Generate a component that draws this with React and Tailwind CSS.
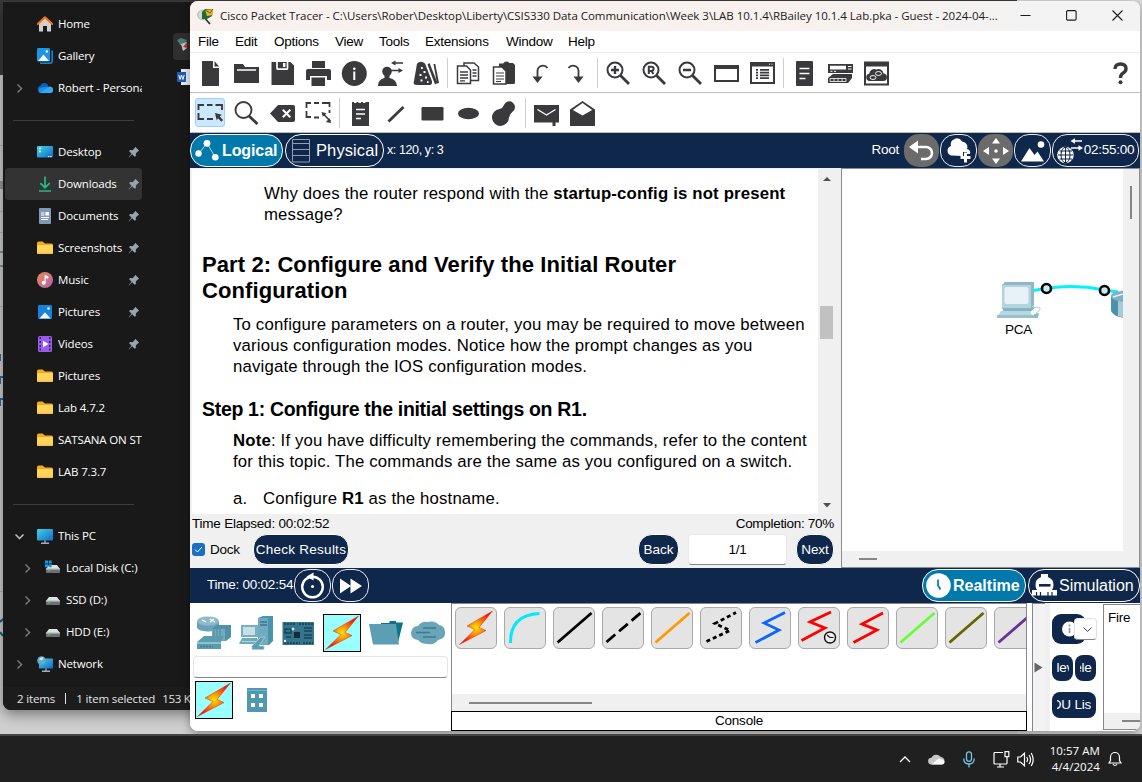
import React from "react";

const SEGOE = "font-['Open_Sans','Noto_Sans',sans-serif]";

/* ---------- File explorer icons (16 x 16) ---------- */
const FolderIcon = () => (
  <svg width="16" height="16" viewBox="0 0 16 16">
    <path d="M0 3q0-1.500 1.500-1.500h4L8 3.500h6.500q1.500 0 1.500 1.500v3H0z" fill="#f5ab0c" />
    <path d="M0 6.200q0-1.200 1.200-1.200H14.800q1.200 0 1.200 1.200V12.800q0 1.200-1.200 1.200H1.200Q0 14 0 12.800z" fill="#fdd25e" />
    <path d="M0 12.500q0 1.500 1.200 1.500H14.800q1.200 0 1.200-1.500z" fill="#fbc13a" />
  </svg>
);
const HomeIcon = () => (
  <svg width="16" height="16" viewBox="0 0 16 16">
    <path d="M2 6.500L8 1l6 5.500V15.500H10V10H6v5.500H2z" fill="#cfcfcf" />
    <path d="M.7 8L8 1.300 15.300 8" fill="none" stroke="#ec7216" strokeWidth="2.200" strokeLinecap="round" strokeLinejoin="round" />
  </svg>
);
const GalleryIcon = () => (
  <svg width="16" height="16" viewBox="0 0 16 16">
    <path d="M15.200 2.500V13q0 2.300-2.300 2.300H3" fill="none" stroke="#1784d8" strokeWidth="1.600" />
    <rect x="0" y="0" width="13" height="13.500" rx="1.200" fill="#1d95e2" />
    <path d="M1 13L6.500 6.500 12 13z" fill="#f2f8fd" />
    <circle cx="9.800" cy="3.500" r="1.200" fill="#fff" />
  </svg>
);
const OneDriveIcon = () => (
  <svg width="16" height="16" viewBox="0 0 16 16">
    <path d="M3.500 12.500a3.500 3.500 0 0 1-.3-6.800A4.500 4.500 0 0 1 11 4.800l-1 7.700z" fill="#0a5fbd" />
    <path d="M3 13a3 3 0 0 1 2-5.500L11 6.500a3.600 3.600 0 0 1 1.700 6.500z" fill="#1a90e8" />
    <path d="M3 13l8-5.500A3 3 0 0 1 16 10.500 2.500 2.500 0 0 1 13.500 13z" fill="#35a9f1" />
  </svg>
);
const DesktopIcon = () => (
  <svg width="16" height="16" viewBox="0 0 16 16">
    <defs>
      <linearGradient id="desk" x1="0" y1="0" x2="1" y2="1">
        <stop offset="0" stopColor="#3ed5e8" />
        <stop offset="1" stopColor="#1469c7" />
      </linearGradient>
    </defs>
    <rect y="2" width="16" height="11.500" rx="1" fill="url(#desk)" />
    <path d="M2 4.500h2M2 7.500h2" stroke="#fff" strokeWidth="1.600" />
    <path d="M11 12.600h1.400M13.200 12.600h1.400" stroke="#fff" strokeWidth="1" />
  </svg>
);
const DownloadIcon = () => (
  <svg width="16" height="16" viewBox="0 0 16 16" fill="none" stroke="#27b98a" strokeWidth="1.700">
    <path d="M8 .5v11M3.300 7.200L8 11.700l4.700-4.500M2 15h12" />
  </svg>
);
const DocumentIcon = () => (
  <svg width="16" height="16" viewBox="0 0 16 16">
    <rect x="2" y="0" width="12" height="16" rx="1" fill="#8199b8" />
    <path d="M4 5h3.500M4 7h3.500M4 9.500h8M4 11.500h7" stroke="#fff" strokeWidth="1.100" />
    <rect x="8.500" y="4" width="3.500" height="3.500" fill="#fff" />
  </svg>
);
const MusicIcon = () => (
  <svg width="16" height="16" viewBox="0 0 16 16">
    <defs>
      <linearGradient id="mus" x1="0" y1="0" x2="1" y2="1">
        <stop offset="0" stopColor="#f08a4b" />
        <stop offset="1" stopColor="#a861b8" />
      </linearGradient>
    </defs>
    <circle cx="8" cy="8" r="8" fill="url(#mus)" />
    <circle cx="6.700" cy="10.800" r="2" fill="#fff" />
    <path d="M8 11V3.500l3 1.200v1.600L8.800 5.500" fill="#fff" stroke="#fff" strokeWidth=".9" />
  </svg>
);
const PicturesIcon = () => (
  <svg width="16" height="16" viewBox="0 0 16 16">
    <rect x="1" y="1" width="14" height="14" rx="1.200" fill="#1583da" />
    <path d="M2.500 14.500L8 8.200l5.500 6.300z" fill="#eef6fd" />
    <circle cx="11.500" cy="4.500" r="1.300" fill="#fff" />
  </svg>
);
const VideosIcon = () => (
  <svg width="16" height="16" viewBox="0 0 16 16">
    <rect x="1" y="0" width="14" height="16" rx="1.500" fill="#9a5be8" />
    <path d="M2.500 2h1.500M2.500 6h1.500M2.500 10h1.500M2.500 13.500h1.500M12 2h1.500M12 6h1.500M12 10h1.500M12 13.500h1.500" stroke="#3c1a75" strokeWidth="1.800" />
    <path d="M6 4.800L11.500 8 6 11.200z" fill="#fff" />
  </svg>
);
const PcIcon = () => (
  <svg width="16" height="16" viewBox="0 0 16 16">
    <rect y="1" width="16" height="11.500" rx=".8" fill="url(#desk)" />
    <path d="M8 12.500v2.500M4 15.200h8" stroke="#9fb0bd" strokeWidth="1.400" />
  </svg>
);
const DriveIcon = ({ system }) => (
  <svg width="16" height="16" viewBox="0 0 16 16">
    <path d="M4 5h8l3 4H1z" fill="#dfe1e3" />
    <rect x="1" y="8.500" width="14" height="4.500" rx=".8" fill="#6c7074" />
    <path d="M1 9h14" stroke="#f3f3f3" strokeWidth=".8" />
    <rect x="3.500" y="10" width="1.300" height="1.300" fill="#3ddc5c" />
    {system && <path d="M0 .5h3v3H0zM3.700 .5h3v3h-3zM0 4.200h3v3H0zM3.700 4.200h3v3h-3z" fill="#149be6" />}
  </svg>
);
const NetworkIcon = () => (
  <svg width="16" height="16" viewBox="0 0 16 16">
    <rect x="2" y="2.500" width="14" height="10" rx=".6" fill="url(#desk)" />
    <path d="M9 12.500V15M5 15.300h8" stroke="#9fb0bd" strokeWidth="1.400" />
    <circle cx="4.500" cy="4.500" r="4.300" fill="#69a9c9" />
    <path d="M2 3.200q2.500-2.500 4.500-1.700L5 4.500z" fill="#d5edf7" />
  </svg>
);
const Pin = () => (
  <svg width="12" height="12" viewBox="0 0 12 12" className="shrink-0">
    <path d="M7.300 0.800l3.900 3.900-1.400.8-2 2 .1 2.600-1.300.6-2.400-2.400L.8 11.400.6 11.200 3.600 7.700 1.200 5.300l.7-1.200 2.600.1 2-2z" fill="#9ba4ad" />
  </svg>
);
const Chevron = ({ open }) => (
  <svg width="9" height="9" viewBox="0 0 9 9" fill="none" stroke={open ? "#c4c4c4" : "#757575"} strokeWidth="1.500">
    <path d={open ? "M.5 2.500l4 4 4-4" : "M2.500 .5l4 4-4 4"} />
  </svg>
);

const NAV = [
  { label: "Home", icon: HomeIcon },
  { label: "Gallery", icon: GalleryIcon },
  { label: "Robert - Personal", icon: OneDriveIcon, chevron: "closed" },
  { divider: true },
  { label: "Desktop", icon: DesktopIcon, pin: true },
  { label: "Downloads", icon: DownloadIcon, pin: true, active: true },
  { label: "Documents", icon: DocumentIcon, pin: true },
  { label: "Screenshots", icon: FolderIcon, pin: true },
  { label: "Music", icon: MusicIcon, pin: true },
  { label: "Pictures", icon: PicturesIcon, pin: true },
  { label: "Videos", icon: VideosIcon, pin: true },
  { label: "Pictures", icon: FolderIcon },
  { label: "Lab 4.7.2", icon: FolderIcon },
  { label: "SATSANA ON ST", icon: FolderIcon },
  { label: "LAB 7.3.7", icon: FolderIcon },
  { divider: true },
  { label: "This PC", icon: PcIcon, chevron: "open" },
  { label: "Local Disk (C:)", icon: DriveIcon, chevron: "closed", child: true, system: true },
  { label: "SSD (D:)", icon: DriveIcon, chevron: "closed", child: true },
  { label: "HDD (E:)", icon: DriveIcon, chevron: "closed", child: true },
  { label: "Network", icon: NetworkIcon, chevron: "closed" },
];

function NavRow({ item }) {
  if (item.divider)
    return (
      <div className="flex h-8 items-center pl-2">
        <div className="h-px w-[121px] bg-[#3d3d3d]" />
      </div>
    );
  const Icon = item.icon;
  return (
    <div className={"flex h-8 items-center overflow-hidden rounded-sm " + (item.child ? "pl-[18px] " : "pl-[10px] ") + (item.active ? "bg-[#333333]" : "")}>
      <div className="w-[9px] shrink-0">{item.chevron && <Chevron open={item.chevron === "open"} />}</div>
      <div className="ml-[13px] w-4 shrink-0">
        <Icon system={item.system} />
      </div>
      <div className="ml-[5px] min-w-0 flex-1 overflow-hidden whitespace-nowrap">{item.label}</div>
      {item.pin && (
        <div className="mr-[2px]">
          <Pin />
        </div>
      )}
    </div>
  );
}

function Explorer() {
  return (
    <div className={"absolute left-[3px] top-px flex h-[709px] w-[200px] flex-col overflow-hidden rounded-bl-lg bg-[#191919] text-[11.5px] tracking-[-0.14px] text-white shadow-[0_4px_14px_rgba(0,0,0,0.45)] " + SEGOE}>
      <div className="h-px shrink-0 bg-[#3a3a3a]" />
      <div className="flex h-[685px]">
        <div className="w-[139px] pl-[2px] pt-[6px]">
          {NAV.map((item, i) => (
            <NavRow key={i} item={item} />
          ))}
        </div>
        <div className="ml-2 mt-[17px] h-[620px] w-[2px] bg-[#9a9a9a]" />
        <div className="ml-[9px] h-full w-[2px] bg-[#272727]" />
        <div className="flex flex-col pl-[14px] pt-[31px]">
          <div className="flex h-[27px] w-10 items-start rounded-sm bg-[#2f2f2f] pl-1 pt-[5px]">
            <svg width="14" height="14" viewBox="0 0 14 14">
              <path d="M0 2l4-2 6 2-2 5-5 0z" fill="#477a78" />
              <path d="M4 6l6-2v6l-4 3z" fill="#bfc9c9" />
              <path d="M6 9l4-5v6z" fill="#cc2f2f" />
            </svg>
          </div>
          <svg width="16" height="17" viewBox="0 0 16 17" className="ml-1 mt-[9px]">
            <rect x="4" width="12" height="16" fill="#e9edf2" />
            <rect y="3" width="9" height="10" fill="#1b5cbe" />
            <path d="M1.800 6l1.300 4.500L4.500 6l1.400 4.500L7.200 6" fill="none" stroke="#fff" strokeWidth="1" />
          </svg>
        </div>
      </div>
      <div className="flex flex-1 items-center bg-[#1c1c1c] pl-[14px] text-[#e4e4e4]">
        <span>2 items</span>
        <span className="ml-[10px] h-[11px] w-px bg-[#e4e4e4]" />
        <span className="ml-[10px] whitespace-nowrap">1 item selected</span>
        <span className="ml-[7px] whitespace-nowrap tracking-[-0.3px]">153 K</span>
      </div>
    </div>
  );
}

/* ---------- Toolbar icons (26 x 26) ---------- */
const INK = "#3a3a3c";
const Glyph = ({ children }) => (
  <svg width="26" height="26" viewBox="0 0 26 26" fill={INK}>
    {children}
  </svg>
);
const Magnifier = ({ children }) => (
  <Glyph>
    <g fill="none" stroke={INK}>
      <circle cx="10" cy="10" r="7.500" strokeWidth="2" />
      <path d="M15.500 15.500L24 24" strokeWidth="2.800" />
      {children}
    </g>
  </Glyph>
);
const ICONS = {
  new: <Glyph><path d="M5 1h11v7h6v18H5zM17.500 1L22 6.500h-4.500z" /></Glyph>,
  open: <Glyph><path d="M1 4h9l2 3h14v16H1z" /><path d="M4 10h19" stroke="#fff" strokeWidth="1.300" /></Glyph>,
  save: <Glyph><path d="M2.500 2H21.500l3.500 3.500V25H2.500z" /><path d="M8 1v7.200q0 1 1 1h8.500q1 0 1-1V1" fill="none" stroke="#fff" strokeWidth="1.700" /><path d="M14 3h2.400v4H14z" fill="#fff" /></Glyph>,
  print: <Glyph><path d="M7 1h13v7H7zM3 9h21q2 0 2 2v9h-4v-4H5v4H1v-9q0-2 2-2z" /><path d="M6.500 17.500h13.500V26H6.500z" /></Glyph>,
  info: <Glyph><circle cx="13.300" cy="13.500" r="12.500" /><path d="M13.300 11.500V20" stroke="#fff" strokeWidth="2" /><circle cx="13.300" cy="8.700" r="1.300" fill="#fff" /></Glyph>,
  user: <Glyph><circle cx="10" cy="11.500" r="4.800" /><path d="M7.500 14h5v4q7 1.500 7.500 8H1q0-6.500 6.500-8z" /><path d="M18 3h8M14 10.500h9" stroke={INK} strokeWidth="1.600" /><path d="M14 3l4.500-2.600v5.200zM26 10.500l-4.500-2.600v5.200z" /></Glyph>,
  shapes: (
    <Glyph>
      <path d="M4 3.500q4-3.500 8 0L18.500 20q2 5-3 5H4q-4.500 0-3-4z" />
      <path d="M14.500 4.500l2-1.500L24.500 23l-2.500 1.500z" />
      <path d="M20.500 4l1.800 0 3.700 19-2 .5z" />
      <path d="M8 8h1.800M10.500 12h2M6.500 15h2M12 17.500h2M7.500 20.500h2M14 22h1.500" stroke="#fff" strokeWidth="1.800" />
    </Glyph>
  ),
  copy: (
    <Glyph>
      <g fill="#fff" stroke={INK} strokeWidth="1.500">
        <path d="M9 3h10l4.500 4v13.500H9z" />
        <path d="M2.500 6h9l4 4v13.500h-13z" />
        <path d="M5 12h8M5 15h8M5 18h8M5 20.800h5M17.500 10h4M17.500 13h4M17.500 16h4" strokeWidth="1.300" />
      </g>
    </Glyph>
  ),
  paste: (
    <Glyph>
      <path d="M8 3.500h4q3-3.500 6.500-.5H22l2 2v17.500q0 1.500-1.500 1.500H8z" />
      <path d="M2.500 7h8.500l4 4v13h-12.500z" fill="#fff" stroke={INK} strokeWidth="1.500" />
      <path d="M5 13h8M5 16h8M5 19h8M5 21.500h5" stroke={INK} strokeWidth="1.200" />
    </Glyph>
  ),
  undo: <Glyph><path d="M10.500 17V10.500a5.500 5.500 0 0 1 10-2.500" fill="none" stroke={INK} strokeWidth="1.800" /><path d="M5.500 16.500h10L10.500 23z" /></Glyph>,
  redo: <Glyph><path d="M15.500 17V10.500a5.500 5.500 0 0 0-10-2.500" fill="none" stroke={INK} strokeWidth="1.800" /><path d="M10.500 16.500h10l-5 6.500z" /></Glyph>,
  zoomIn: <Magnifier><path d="M6 10h8M10 6v8" strokeWidth="2.400" /></Magnifier>,
  zoomReset: <Magnifier><path d="M7.800 14V6.700h2.700a1.900 1.900 0 0 1 0 4.200H8M10.500 11l2 3" strokeWidth="2" /></Magnifier>,
  zoomOut: <Magnifier><path d="M6 10h8" strokeWidth="2.400" /></Magnifier>,
  frame: <Glyph><path d="M1 5h25v17H1zM3 9v11h21V9z" fillRule="evenodd" /></Glyph>,
  panel: <Glyph><path d="M1 2h25v22H1zM3 6.500V22h21V6.500z" fillRule="evenodd" /><path d="M7 9.800h2M11 9.800h9M7 12.600h2M11 12.600h9M7 15.400h2M11 15.400h9M7 18.200h2M11 18.200h9" stroke={INK} strokeWidth="1.700" /><path d="M20 4.200h1M22.500 4.200h1" stroke="#fff" /></Glyph>,
  page: <Glyph><rect x="5" y="1" width="17" height="25" rx="1" /><path d="M8.500 8.500h10M8.500 13.500h10M8.500 18.500h6" stroke="#fff" strokeWidth="1.400" /></Glyph>,
  devices: (
    <Glyph>
      <path d="M1 4h25v9H1zM3 5.800v3.700h16V5.800z" fillRule="evenodd" />
      <path d="M3.500 11.300h2M7 11.300h2M21 6.500h3.500M21 9h3.500" stroke="#fff" strokeWidth="1" />
      <path d="M6 14h19v4l-4 5H1v-5z" />
      <path d="M3 18.500h16v3H3zM7 18.500v3M11 18.500v3M15 18.500v3" fill="none" stroke="#fff" strokeWidth=".8" />
    </Glyph>
  ),
  cluster: (
    <Glyph>
      <path d="M1 1.500h25v24H1zM3 6.500v17h21v-17z" fillRule="evenodd" />
      <path d="M6.500 21a3.700 3.700 0 0 1-.3-7.300 5 5 0 0 1 7-4.200 5 5 0 0 1 7.300 4 3.800 3.800 0 0 1 .5 7.500z" />
      <g fill="none" stroke="#fff" strokeWidth=".9"><ellipse cx="15.500" cy="13.500" rx="3" ry="2" /><ellipse cx="10" cy="17.500" rx="3" ry="2" /></g>
    </Glyph>
  ),
  help: <Glyph><path d="M8 9q0-5 5.500-5t5.500 4.800q0 2.700-2.800 4.200t-2.700 5" fill="none" stroke={INK} strokeWidth="3.400" /><circle cx="13.500" cy="22.300" r="2" /></Glyph>,
  select: (
    <Glyph>
      <path d="M1.500 10V5H7M10 5h5.500M18.500 5H25v5M1.500 13v6H7M10 19h6" fill="none" stroke={INK} strokeWidth="1.900" />
      <path d="M18 13l7 1.800-2.300 1.400L26 20l-1.500 1.700-3.600-3.400-1.200 2.200z" />
    </Glyph>
  ),
  search: <Glyph><circle cx="10.500" cy="10" r="8" fill="none" stroke={INK} strokeWidth="1.900" /><path d="M16 16l8.500 8" stroke={INK} strokeWidth="2.800" /></Glyph>,
  erase: <Glyph><path d="M1 13.500L9 5h15q2 0 2 2v13q0 2-2 2H9z" /><path d="M13.800 9.800l7.500 7.500M21.300 9.800l-7.500 7.500" stroke="#fff" strokeWidth="2" /></Glyph>,
  resize: (
    <Glyph>
      <path d="M1.500 8V3H6M9 3h5M17 3h7.500v4M1.500 11v6H6M9 17.500h5M24.500 10v3" fill="none" stroke={INK} strokeWidth="1.800" />
      <path d="M18 13.500l7.500 8" stroke={INK} strokeWidth="1.600" />
      <path d="M16.500 12l5 1.200-3.700 3.600zM26 23l-5.200-1 3.900-3.800z" />
    </Glyph>
  ),
  notepad: <Glyph><path d="M5 2h2v1h2.500V2h2v1H14V2h2v1h2.500V2H22v24H5z" /><path d="M9 9.500h9M9 14h9M9 18.500h5" stroke="#fff" strokeWidth="1.500" /></Glyph>,
  line: <Glyph><path d="M5.500 21.500L20.500 7" stroke={INK} strokeWidth="2.800" /></Glyph>,
  rect: <Glyph><rect x="2.500" y="7" width="22" height="13.500" rx="1.200" /></Glyph>,
  ellipse: <Glyph><ellipse cx="13.500" cy="13.500" rx="10.500" ry="5.800" /></Glyph>,
  freeform: <Glyph><path d="M13 5a5.700 5.700 0 1 1 8.500 6.800q-2 1.300-3.500 5.700a8.500 8.500 0 1 1-9.500-8.500Q12 8 13 5z" /></Glyph>,
  mail: <Glyph><path d="M1 5h25v17.500h-3.500V26h-3v-3.500H1z" /><path d="M4.500 9.500l9 5.500 9-5.500" fill="none" stroke="#fff" strokeWidth="1.400" /></Glyph>,
  mailOpen: <Glyph><path d="M1 9.500L13.500 1 26 9.500V26H1zM3.800 10l9.700 5.500L23.200 10l-9.700-7z" fillRule="evenodd" /></Glyph>,
};

function Toolbar({ items, end }) {
  return (
    <div className="flex h-10 shrink-0 items-center border-b border-[#bdbdbd] bg-white pl-[2px]">
      {items.map((name, i) =>
        name === "|" ? (
          <div key={i} className="flex w-[6px] justify-center">
            <div className="h-[30px] w-px bg-[#cdcdcd]" />
          </div>
        ) : (
          <div key={i} className="flex w-9 justify-center">
            <div className={name === "select" ? "-mx-px flex h-[29px] w-[30px] items-center justify-center rounded-[3px] border border-[#99d1ff] bg-[#cce8ff]" : "flex h-[30px] w-[30px] items-center justify-center"}>
              {ICONS[name]}
            </div>
          </div>
        )
      )}
      {end && <div className="ml-auto mr-[7px]">{ICONS[end]}</div>}
    </div>
  );
}

/* ---------- Packet Tracer title bar ---------- */
function TitleBar() {
  return (
    <div className={"flex h-[30px] shrink-0 items-center bg-linear-to-r from-[#f9f1ed] from-60% to-[#f3f3f3] to-90% pl-[7px] " + SEGOE}>
      <svg width="17" height="17" viewBox="0 0 17 17">
        <circle cx="5.500" cy="7" r="4.800" fill="#d3dbd6" stroke="#b7b7b7" />
        <path d="M5 4l3-3h8l-1 7-5 3H5z" fill="#1d6b35" />
        <path d="M8 2l8-1v6l-6 1z" fill="#e5b52d" />
        <path d="M8 2l5 3 3-4" fill="none" stroke="#7d5a08" />
        <path d="M8.500 11l4.500 5" stroke="#333" strokeWidth="1.800" />
      </svg>
      <div className="ml-[6px] whitespace-nowrap text-[11.5px] tracking-[-0.028px] text-[#1a1a1a]">
        Cisco Packet Tracer - C:\Users\Rober\Desktop\Liberty\CSIS330 Data Communication\Week 3\LAB 10.1.4\RBailey 10.1.4 Lab.pka - Guest - 2024-04-...
      </div>
      <div className="ml-auto mr-[17px] flex items-center gap-[35px] pb-px">
        <svg width="11" height="11" viewBox="0 0 11 11" stroke="#1b1b1b"><path d="M.5 5.500h10" /></svg>
        <svg width="11" height="11" viewBox="0 0 11 11" fill="none" stroke="#1b1b1b" strokeWidth="1.100"><rect x=".6" y=".6" width="9.500" height="9.500" rx="1.200" /></svg>
        <svg width="11" height="11" viewBox="0 0 11 11" stroke="#1b1b1b" strokeWidth="1.100"><path d="M.5 .5l10 10M10.500 .5l-10 10" /></svg>
      </div>
    </div>
  );
}

const MENUS = [
  ["File", "w-[37px]"],
  ["Edit", "w-[39px]"],
  ["Options", "w-[61px]"],
  ["View", "w-[44px]"],
  ["Tools", "w-[46px]"],
  ["Extensions", "w-[81px]"],
  ["Window", "w-[62px]"],
  ["Help", "w-[40px]"],
];

/* ---------- Workspace bar ---------- */
function RoundButton({ muted, width, children }) {
  return (
    <div className={"flex h-[33px] items-center justify-center rounded-[15px] " + width + " " + (muted ? "bg-[#6b6b6b]" : "border border-white/90")}>{children}</div>
  );
}

function WorkspaceBar() {
  return (
    <div className="flex h-[35px] shrink-0 items-center bg-[#0f274b] pr-[1px] text-[13.5px] tracking-[-0.24px] text-white">
      <div className="flex h-[33px] w-[93px] items-center rounded-[16px] border border-white bg-[#0279ab] pl-1">
        <svg width="25" height="22" viewBox="0 0 25 22" fill="#fff" className="-mt-[2px]">
          <path d="M3.500 15L12 4 20 18" fill="none" stroke="#fff" strokeWidth=".7" />
          <circle cx="3.500" cy="14.500" r="3.200" /><circle cx="12" cy="4.300" r="3.400" /><circle cx="20.300" cy="18.200" r="3.300" />
        </svg>
        <span className="ml-[2px] text-[16px] font-bold leading-none tracking-[-0.1px]">Logical</span>
      </div>
      <div className="ml-[2px] flex h-[33px] w-[99px] items-center rounded-[16px] border border-white pl-[6px]">
        <svg width="18" height="24" viewBox="0 0 18 24" fill="none" stroke="#8f9db5"><path d="M.5 .5h17v22.500H.5zM.5 4.500h17M.5 10.500h17M.5 16.500h17" /></svg>
        <span className="ml-[6px] text-[16.500px] leading-none tracking-[0.1px]">Physical</span>
      </div>
      <span className="ml-[3px] text-[12.5px] tracking-[-0.4px]">x: 120, y: 3</span>
      <span className="ml-auto mr-[5px]">Root</span>
      <div className="flex items-center gap-[1px]">
        <RoundButton muted width="w-[35px]">
          <svg width="25" height="22" viewBox="0 0 25 22"><path d="M6 7h11a5.500 5.500 0 0 1 0 12h-5" fill="none" stroke="#fff" strokeWidth="2.600" /><path d="M0 7l9-6.500v13z" fill="#fff" /></svg>
        </RoundButton>
        <RoundButton width="w-[37px]">
          <svg width="26" height="26" viewBox="0 0 26 26" fill="#fff"><path d="M5 17.500a5 5 0 0 1 0-9.500 6 6 0 0 1 11-4.500 5.500 5.500 0 0 1 5 7.500q4 1 3 5h-3v-2h-4v4z" /><path d="M19.500 14.500v10M14.500 19.500h10" stroke="#fff" strokeWidth="3" /></svg>
        </RoundButton>
        <RoundButton muted width="w-[35px]">
          <svg width="26" height="26" viewBox="0 0 26 26" fill="#fff"><path d="M13 0l4 5.500H9zM13 26l4-5.500H9zM0 13l6-4v8zM26 13l-6-4v8z" /><circle cx="13" cy="13" r="1.800" /></svg>
        </RoundButton>
        <RoundButton width="w-[37px]">
          <svg width="24" height="22" viewBox="0 0 24 22" fill="#fff"><path d="M0 21.500L8.500 8l5 7 3-3.500 6.500 10z" /><circle cx="20" cy="4.500" r="3.300" /></svg>
        </RoundButton>
        <RoundButton width="w-[87px]">
          <svg width="26" height="26" viewBox="0 0 26 26" fill="none" stroke="#fff">
            <circle cx="8.500" cy="17" r="7.800" fill="#fff" />
            <path d="M8.500 9v16M1 17h15.500M2.500 13h12.500M2.500 21h12.500" stroke="#0f274b" /><ellipse cx="8.500" cy="17" rx="4.500" ry="7.800" stroke="#0f274b" />
            <path d="M17 3h8M14 10h9" strokeWidth="1.600" /><path d="M13.500 3l4.500-2.700v5.400zM26 10l-4.500-2.700v5.400z" fill="#fff" stroke="none" />
          </svg>
          <span className="ml-px">02:55:00</span>
        </RoundButton>
      </div>
    </div>
  );
}

/* ---------- Instructions panel ---------- */
function Instructions() {
  return (
    <div className="flex w-[651px] flex-col bg-[#f0f0f0] pl-[2px] pt-px text-[13.5px] tracking-[-0.22px] text-black">
      <div className="flex h-[345px]">
        <div className="w-[626px] overflow-hidden whitespace-nowrap bg-white pl-[11px] pt-[14px] text-[16.75px] leading-[21px] tracking-[0.17px]">
          <div className="pl-[61px]">
            <div>Why does the router respond with the <b>startup-config is not present</b></div>
            <div>message?</div>
          </div>
          <h1 className="-ml-px mt-[27px] text-[22px] font-bold leading-[26px] tracking-[0.1px]">
            Part 2: Configure and Verify the Initial Router
            <br />
            Configuration
          </h1>
          <div className="mt-[10px] pl-[30px]">
            To configure parameters on a router, you may be required to move between
            <br />
            various configuration modes. Notice how the prompt changes as you
            <br />
            navigate through the IOS configuration modes.
          </div>
          <h2 className="-ml-px mt-[21px] text-[19.5px] font-bold leading-[22px] tracking-[-0.31px]">Step 1: Configure the initial settings on R1.</h2>
          <div className="mt-[10px] pl-[30px]">
            <b>Note</b>: If you have difficulty remembering the commands, refer to the content
            <br />
            for this topic. The commands are the same as you configured on a switch.
          </div>
          <div className="mt-4 flex pl-[30px]">
            <span className="w-[30px]">a.</span>
            <span>Configure <b>R1</b> as the hostname.</span>
          </div>
        </div>
        <div className="flex w-[17px] flex-col items-center pt-2">
          <svg width="8" height="5" viewBox="0 0 8 5"><path d="M4 0l4 4H0z" fill="#505050" /></svg>
          <div className="mt-[124px] h-[33px] w-[13px] bg-[#c1c1c1]" />
          <svg width="8" height="5" viewBox="0 0 8 5" className="mb-[6px] mt-auto"><path d="M0 0h8L4 4.500z" fill="#505050" /></svg>
        </div>
      </div>
      <div className="flex h-5 items-center justify-between pr-[7px] pt-px">
        <span>Time Elapsed: 00:02:52</span>
        <span className="tracking-[-0.3px]">Completion: 70%</span>
      </div>
      <div className="flex h-[31px] items-center pr-[7px]">
        <div className="flex h-[13px] w-[13px] items-center justify-center rounded-[3px] bg-[#1b6ec2]">
          <svg width="9" height="9" viewBox="0 0 9 9" fill="none" stroke="#fff"><path d="M1 4.500l2.500 2.500L8 2" /></svg>
        </div>
        <span className="ml-[5px] w-[43px] pt-px">Dock</span>
        <div className="flex h-[31px] w-[96px] items-center justify-center whitespace-nowrap rounded-[14px] border border-white bg-[#0f274b] pt-px tracking-[0.25px] text-white">Check Results</div>
        <div className="ml-auto flex h-[31px] w-[41px] items-center justify-center rounded-[14px] border border-white bg-[#0f274b] pt-px tracking-normal text-white">Back</div>
        <div className="ml-[9px] flex h-[31px] w-[99px] items-center justify-center rounded-sm border border-b-[#868686] border-[#e8e8e8] bg-white pt-px">1/1</div>
        <div className="ml-[9px] flex h-[31px] w-[38px] items-center justify-center rounded-[14px] border border-white bg-[#0f274b] pt-px tracking-[-0.1px] text-white">Next</div>
      </div>
    </div>
  );
}

/* ---------- Topology canvas ---------- */
function Topology() {
  return (
    <div className="flex flex-1 flex-col border border-[#8a8c93] bg-[#f0f0f0]">
      <div className="flex h-[382px]">
        <div className="relative w-[281px] overflow-hidden bg-white">
          <svg width="281" height="382" viewBox="842 169 281 382" className="absolute inset-0">
            <path d="M1032 291q9-2 14-2.500 29-4.500 58 1.500l14 2" fill="none" stroke="#00f4fb" strokeWidth="3" />
            <path d="M1002 285l3-3h29v23l-4 4h-28z" fill="#8fb8c6" />
            <path d="M1002 285h29v23h-29z" fill="#b5d3dd" />
            <rect x="1004.500" y="287" width="24" height="17" rx="2" fill="#e8f1f6" />
            <path d="M1003 308h27l4-2v3l-4 3h-27z" fill="#84b4c3" />
            <path d="M1001 311h29l3 6h-36z" fill="#b9d7e0" />
            <path d="M997 315h36v3h-36z" fill="#99c0cd" />
            <path d="M1033 308q8-2 7 1t-4 4" fill="none" stroke="#a9ccd7" />
            <path d="M1034 314l5-1-1 5h-6z" fill="#8dbccb" />
            <path d="M1111 297v14q3 6 14 7v-22z" fill="#4a93ab" />
            <path d="M1118 300h8v18l-8-2z" fill="#a8cbd7" />
            <ellipse cx="1126" cy="296" rx="15" ry="6" fill="#7fb0c3" />
            <path d="M1113 297l10-3M1118 291l5-1" stroke="#e6f3f7" strokeWidth="1.500" />
            <circle cx="1046.500" cy="288.500" r="4.500" fill="#c3eef0" stroke="#000" strokeWidth="2.600" />
            <circle cx="1104.500" cy="290.500" r="4.500" fill="#c3eef0" stroke="#000" strokeWidth="2.600" />
          </svg>
          <div className="absolute left-[163px] top-[153px] text-[13.5px] leading-4 tracking-[-0.3px] text-black">PCA</div>
        </div>
        <div className="flex flex-1 justify-center pt-[17px]">
          <div className="h-[33px] w-[2px] bg-[#868686]" />
        </div>
      </div>
      <div className="flex flex-1 items-center pl-[17px]">
        <div className="h-[2px] w-[18px] bg-[#868686]" />
      </div>
    </div>
  );
}

/* ---------- Time bar ---------- */
function TimeBar() {
  return (
    <div className="flex h-[35px] shrink-0 items-center bg-[#0f274b] text-[13.5px] tracking-[-0.24px] text-white">
      <span className="ml-[17px] w-[87px] whitespace-nowrap">Time: 00:02:54</span>
      <div className="flex gap-px">
        <RoundButton width="w-[37px]">
          <svg width="25" height="27" viewBox="0 0 25 27"><circle cx="12.500" cy="15" r="10.300" fill="none" stroke="#fff" strokeWidth="2.400" /><path d="M6.500 4.500L13.500 .5v8z" fill="#fff" /><circle cx="12.500" cy="14.500" r="1.600" fill="#fff" /></svg>
        </RoundButton>
        <RoundButton width="w-[37px]">
          <svg width="22" height="16" viewBox="0 0 22 16" fill="#fff"><path d="M0 .5L11 8 0 15.500zM10.500 .5L22 8l-11.500 7.500z" /></svg>
        </RoundButton>
      </div>
      <div className="ml-auto flex h-[33px] w-[104px] items-center rounded-[16px] border border-white bg-[#0279ab] pl-[3px]">
        <svg width="25" height="25" viewBox="0 0 25 25"><circle cx="12.500" cy="12.500" r="12.300" fill="#fff" /><path d="M12 6.500v6l2.500 4" fill="none" stroke="#0279ab" strokeWidth="1.700" /></svg>
        <span className="ml-[2px] text-[16px] font-bold leading-none tracking-normal">Realtime</span>
      </div>
      <div className="ml-[2px] flex h-[33px] w-[112px] items-center rounded-[16px] border border-white pl-[3px]">
        <svg width="25" height="24" viewBox="0 0 25 24" fill="#fff"><path d="M9 0h7v3q6 2.500 5.500 8 0 3-1.500 5h5v5.500H0V16h5q-1.500-2-1.500-5Q3 5.500 9 3z" /><rect x="7" y="10" width="11.500" height="2.600" fill="#0f274b" /><path d="M4.500 18v4M8.500 18v4M16 18v4M20 18v4" stroke="#0f274b" strokeWidth="1.200" /></svg>
        <span className="ml-[2px] text-[16px] leading-none tracking-normal">Simulation</span>
      </div>
    </div>
  );
}

/* ---------- Device palette ---------- */
const Bolt = () => (
  <svg width="36" height="36" viewBox="0 0 36 36">
    <defs>
      <radialGradient id="bolt" cx="0.5" cy="0.5" r="0.5">
        <stop offset="0" stopColor="#ffe600" />
        <stop offset="0.5" stopColor="#ff7a00" />
        <stop offset="1" stopColor="#ff1010" />
      </radialGradient>
    </defs>
    <path d="M34.500 1L9 16l8 3.500L1.500 34.500 28 20.500l-7-3z" fill="url(#bolt)" stroke="#c83a1a" strokeWidth=".5" />
  </svg>
);
const DeviceCategories = () => (
  <>
    <svg width="34" height="34" viewBox="0 0 34 34">
      <path d="M0 5v7q2 3 10 3.500T22 12V5z" fill="#6aa3b8" />
      <ellipse cx="11" cy="5" rx="11" ry="4.500" fill="#8fbccb" />
      <path d="M5 4l4 2M13 3l5 3M13 6l4-3" stroke="#fff" strokeWidth="1.300" />
      <path d="M15 13l5-4h14v12l-5 4H15z" fill="#4f93aa" />
      <path d="M15 13h13v12H15z" fill="#79aabc" /><path d="M17 13v10M20 13v10M23 13v10" stroke="#4a8499" strokeWidth="1" />
      <path d="M0 26l7-6h20l-3 6zM0 26h24v7H0z" fill="#5b9cb1" /><path d="M0 26h24v2H0z" fill="#93c0cd" /><path d="M3 30.500h13" stroke="#3e7d92" strokeWidth="1.500" strokeDasharray="2 1" />
    </svg>
    <svg width="35" height="34" viewBox="0 0 35 34">
      <path d="M19 2l5-2h10v25l-4 4H19z" fill="#4b93aa" /><path d="M19 2h10v27H19z" fill="#70abc0" /><path d="M21 6h7M21 9h7" stroke="#37788d" strokeWidth="1.500" />
      <path d="M2 9h17v12H2z" fill="#79b0c1" /><path d="M4 11h12v8H4z" fill="#c6e0e8" />
      <path d="M3 22h15l1 2h1l2 4H0l2-4z" fill="#6fa9bb" /><path d="M3 25.500h15" stroke="#b5d5de" strokeWidth="1" />
      <path d="M13 30l9-9 4 0-6 9 5 0v3.500H13z" fill="#5e9db1" stroke="#a9cfda" strokeWidth=".8" />
    </svg>
    <svg width="33" height="25" viewBox="0 0 33 25">
      <rect x=".5" y="1" width="31.500" height="23" fill="#34748c" />
      <path d="M2 3h12M17 3h14M2 22h16M21 22h10" stroke="#143b4b" strokeWidth="1.600" strokeDasharray="2 1" />
      <rect x="12" y="11" width="6" height="6" fill="#132c38" /><path d="M22 7h8M22 10h8M22 14h8M22 17h8M3 8h6v4H3zM4 16h5" stroke="#18455a" strokeWidth="1.600" fill="none" />
      <circle cx="11" cy="8" r="1.500" fill="#c8dfe5" /><circle cx="3" cy="20" r="1.200" fill="#e5f0f3" />
    </svg>
    <div className="flex h-[38px] w-[38px] items-center justify-center border border-black bg-[#99ffff]"><Bolt /></div>
    <svg width="34" height="26" viewBox="0 0 34 26">
      <path d="M12 3l8 0 1-2h6v1.500h7l-5 20H12z" fill="#0d7388" />
      <path d="M0 4h27l3 20.500H4z" fill="#5c9eb3" />
    </svg>
    <svg width="35" height="24" viewBox="0 0 35 24">
      <path d="M7 19Q0 18 0 12q1-7 7-7 4-5 9-4 8-2 12 3 6 1 6 7 1 6-7 8-3 5-10 4-7 0-10-4z" fill="#69a4b7" />
      <path d="M12 7h13M5 11.500h14M12 16h13" stroke="#3c7a90" strokeWidth="1.300" />
    </svg>
  </>
);

const CONNECTIONS = [
  <Bolt />,
  <path d="M6.500 36Q6 8 35.500 6.500" stroke="#00eaff" strokeWidth="3" />,
  <path d="M4.500 35.500L38.500 6" stroke="#000" strokeWidth="2.800" />,
  <path d="M4.500 35L38.500 6" stroke="#000" strokeWidth="2.800" strokeDasharray="11.500 5" />,
  <path d="M4.500 35.500L38.500 6" stroke="#ff9900" strokeWidth="2.800" />,
  <path d="M6.500 34.500L30 23.500 15 16.500 36 5.500" stroke="#000" strokeWidth="2.800" strokeDasharray="4 3" />,
  <path d="M6.500 35.500L30 23 15 16 36 5.500" stroke="#0a66ff" strokeWidth="2.800" />,
  <g strokeWidth="2.800">
    <path d="M3.500 33.500L27 21 12 15 33 5" stroke="#f00" />
    <circle cx="32" cy="30.500" r="5.500" fill="#eee" stroke="#111" strokeWidth="1.400" />
    <path d="M29 28l3 2.500h3.500" stroke="#111" strokeWidth="1.200" />
  </g>,
  <path d="M6.500 35.500L30 23 15 17 36 6" stroke="#f00" strokeWidth="2.800" />,
  <path d="M4.500 35.500L38.500 6" stroke="#66ff33" strokeWidth="2.800" />,
  <path d="M4.500 35.500L38.500 6" stroke="#666600" strokeWidth="2.800" />,
  <path d="M4.500 35.500L38.500 6" stroke="#663399" strokeWidth="2.800" />,
];

function Palette() {
  return (
    <div className="flex h-[128px] shrink-0 bg-white text-[13.5px] tracking-[-0.22px] text-black">
      <div className="w-[261px] pl-[3px]">
        <div className="flex h-[53px] items-center justify-between pl-1 pr-[5px] pt-[7px]">
          <DeviceCategories />
        </div>
        <div className="h-[22px] w-[255px] rounded-sm border border-b-[#868686] border-[#e5e5e5]" />
        <div className="flex items-center pl-[2px] pt-[3px]">
          <div className="flex h-[38px] w-[38px] items-center justify-center border border-black bg-[#99ffff]"><Bolt /></div>
          <svg width="20" height="24" viewBox="0 0 20 24" className="ml-[14px]">
            <rect width="20" height="24" fill="#4f98b0" /><path d="M0 2.500h20" stroke="#78b3c6" />
            <path d="M4 6h4v4H4zM12 6h4v4h-4zM4 15h4v4H4zM12 15h4v4h-4z" fill="#fff" />
          </svg>
        </div>
      </div>
      <div className="flex w-[576px] flex-col">
        <div className="flex h-[108px] flex-col border-x border-t border-[#85878d]">
          <div className="flex h-[90px] gap-[7px] overflow-hidden pl-[3px] pt-[3px]">
            {CONNECTIONS.map((shape, i) => (
              <div key={i} className="flex h-[42px] w-[42px] shrink-0 items-center justify-center rounded-[6px] border border-[#a9a9a9] bg-[#e4e4e4]">
                {i === 0 ? shape : <svg width="42" height="42" viewBox="0 0 42 42" fill="none" className="shrink-0">{shape}</svg>}
              </div>
            ))}
          </div>
          <div className="flex flex-1 items-center bg-[#f0f0f0] pl-[17px]">
            <div className="h-[2px] w-[123px] bg-[#868686]" />
          </div>
        </div>
        <div className="flex h-5 items-center justify-center border border-black pt-px">Console</div>
      </div>
      <div className="ml-[5px] flex h-full w-[13px] items-center border-l border-t border-[#85878d] bg-[#f3f3f3] pl-px">
        <svg width="9" height="11" viewBox="0 0 9 11"><path d="M.5 .5l8 5-8 5z" fill="#666" /></svg>
      </div>
      <div className="w-[5px] bg-[#f0f0f0]" />
      <div className="ml-[2px] w-11 pt-[11px] text-white">
        <div className="relative h-[30px]">
          <div className="flex h-[30px] w-[34px] items-center justify-end rounded-[9px] bg-[#0f274b]">
            <svg width="24" height="16" viewBox="0 0 24 16"><circle cx="7.500" cy="8" r="7.500" fill="#fff" /><path d="M7.500 7v5M7.500 3.500v2" stroke="#8592a8" strokeWidth="1.600" /></svg>
          </div>
          <div className="absolute left-[22px] top-1 flex h-[22px] w-[23px] items-center justify-center rounded-sm border border-b-[#868686] border-[#e0e0e0] bg-white">
            <svg width="9" height="6" viewBox="0 0 9 6" fill="none" stroke="#444" className="ml-1 mt-px"><path d="M.5 .5l4 4 4-4" /></svg>
          </div>
        </div>
        <div className="mt-[11px] flex gap-[2px]">
          <div className="flex h-[26px] w-[21px] items-center justify-center rounded-lg bg-[#0f274b]"><div className="flex w-[12px] overflow-hidden">lev</div></div>
          <div className="flex h-[26px] w-[21px] items-center justify-center rounded-lg bg-[#0f274b]"><div className="flex w-[12px] justify-end overflow-hidden">ele</div></div>
        </div>
        <div className="mt-[11px] flex h-[26px] items-center justify-center rounded-lg bg-[#0f274b]"><div className="flex w-[34px] justify-end overflow-hidden whitespace-nowrap">DU Lis</div></div>
      </div>
      <div className="ml-[7px] mt-px flex h-[126px] flex-1 flex-col border border-r-0 border-[#85878d]">
        <div className="flex-1 pl-1 pt-[3px]">Fire</div>
        <div className="flex h-4 items-center justify-end bg-[#f0f0f0]"><div className="h-[2px] w-[18px] bg-[#868686]" /></div>
      </div>
    </div>
  );
}

function PacketTracer() {
  return (
    <div className="absolute left-[190px] top-px flex h-[730px] w-[950px] flex-col overflow-hidden rounded-lg bg-white font-['Liberation_Sans',Arial,sans-serif] shadow-[0_3px_10px_rgba(0,0,0,0.35)]">
      <TitleBar />
      <div className="flex h-[22px] shrink-0 items-center border-b border-[#ececec] pl-2 pt-px text-[13.5px] tracking-[-0.24px] text-black">
        {MENUS.map(([label, width]) => (
          <div key={label} className={width}>{label}</div>
        ))}
      </div>
      <Toolbar
        items={["new", "open", "save", "print", "info", "user", "shapes", "|", "copy", "paste", "undo", "redo", "|", "zoomIn", "zoomReset", "zoomOut", "frame", "panel", "|", "page", "devices", "cluster"]}
        end="help"
      />
      <Toolbar items={["select", "search", "erase", "resize", "|", "notepad", "line", "rect", "ellipse", "freeform", "|", "mail", "mailOpen"]} />
      <WorkspaceBar />
      <div className="flex h-[400px] shrink-0">
        <Instructions />
        <Topology />
      </div>
      <TimeBar />
      <Palette />
    </div>
  );
}

/* ---------- Taskbar ---------- */
function Taskbar() {
  return (
    <div className={"absolute inset-x-0 bottom-0 flex h-[48px] items-center border-t-2 border-[#454545] bg-[#202020] text-[11.500px] leading-4 text-white " + SEGOE}>
      <div className="ml-auto flex items-center pr-[20px]">
        <svg width="12" height="8" viewBox="0 0 12 8" fill="none" stroke="#fff" strokeWidth="1.300"><path d="M1 7l5-5 5 5" /></svg>
        <svg width="17" height="12" viewBox="0 0 17 12" className="ml-[17px]"><path d="M3.500 11.500a3.400 3.400 0 0 1 0-6.800A5 5 0 0 1 12 3.500q5 1.500 4.500 5a3 3 0 0 1-3 3z" fill="#c6c6c6" /><path d="M3.500 11.500l7-6 5 1.500q2.500 4-2 4.500z" fill="#f7f7f7" /></svg>
        <svg width="12" height="17" viewBox="0 0 12 17" className="ml-[18px]" fill="none" stroke="#7cc3e2" strokeWidth="1.300"><rect x="3.500" y=".8" width="5" height="9.500" rx="2.500" /><path d="M.8 7.500q0 5.500 5.200 5.500t5.200-5.500M6 13v3.500" /></svg>
        <svg width="17" height="17" viewBox="0 0 17 17" className="ml-[18px]" fill="none" stroke="#fff" strokeWidth="1.200"><path d="M10 1.500H2q-1 0-1 1v9.500q0 1 1 1h11q1 0 1-1V9M7 13v3M4 16h7M12 .7h3.800v5H12zM14 5.700V10" /></svg>
        <svg width="17" height="15" viewBox="0 0 17 15" className="ml-[7px]" fill="none" stroke="#fff" strokeWidth="1.200"><path d="M.8 5h2.700L7.500 1.200v12.600L3.500 10H.8z" /><path d="M9.700 5q1.800 2.500 0 5M12 3q3.200 4.500 0 9M14.200 1q4 6.500 0 13" /></svg>
        <div className="ml-[14px] w-[52px] text-right tracking-[0.05px]">
          <div className="whitespace-nowrap">10:57 AM</div>
          <div>4/4/2024</div>
        </div>
        <svg width="14" height="16" viewBox="0 0 14 16" className="ml-[8px]" fill="none" stroke="#fff" strokeWidth="1.200"><path d="M1 12h12l-1.500-2.500V6a4.500 4.500 0 0 0-9 0v3.500zM5 13q2 3 4 0" /></svg>
      </div>
    </div>
  );
}

export default function App() {
  return (
    <div className="relative h-[782px] w-[1142px] overflow-hidden bg-[#cfcfcf]">
      <div className="flex h-[75px] w-full flex-col bg-[#3a3a3a]" />
      <div className="absolute right-0 top-0 h-[734px] w-[125px] bg-[#d9d9d9]" />
      <svg width="3" height="660" viewBox="0 0 3 660" className="absolute left-0 top-0">
        <path d="M0 145.500h3M0 211.500h3M0 232.500h3M0 306.500h3M0 591.500h3M0 678h3" stroke="#b5b5b5" />
        <path d="M0 181h3v8H0z" fill="#9b9b9b" />
        <path d="M0 252h3M0 266h3" stroke="#2a6060" strokeWidth="1.200" />
        <path d="M0 354h1v7H0zM0 376h3v2H1v6H0zM0 398h3v2H1v6H0z" fill="#36639c" />
        <path d="M3 619l-3 3M0 632l3 4" stroke="#0e5f80" strokeWidth="2" />
      </svg>
      <Explorer />
      <PacketTracer />
      <Taskbar />
    </div>
  );
}
